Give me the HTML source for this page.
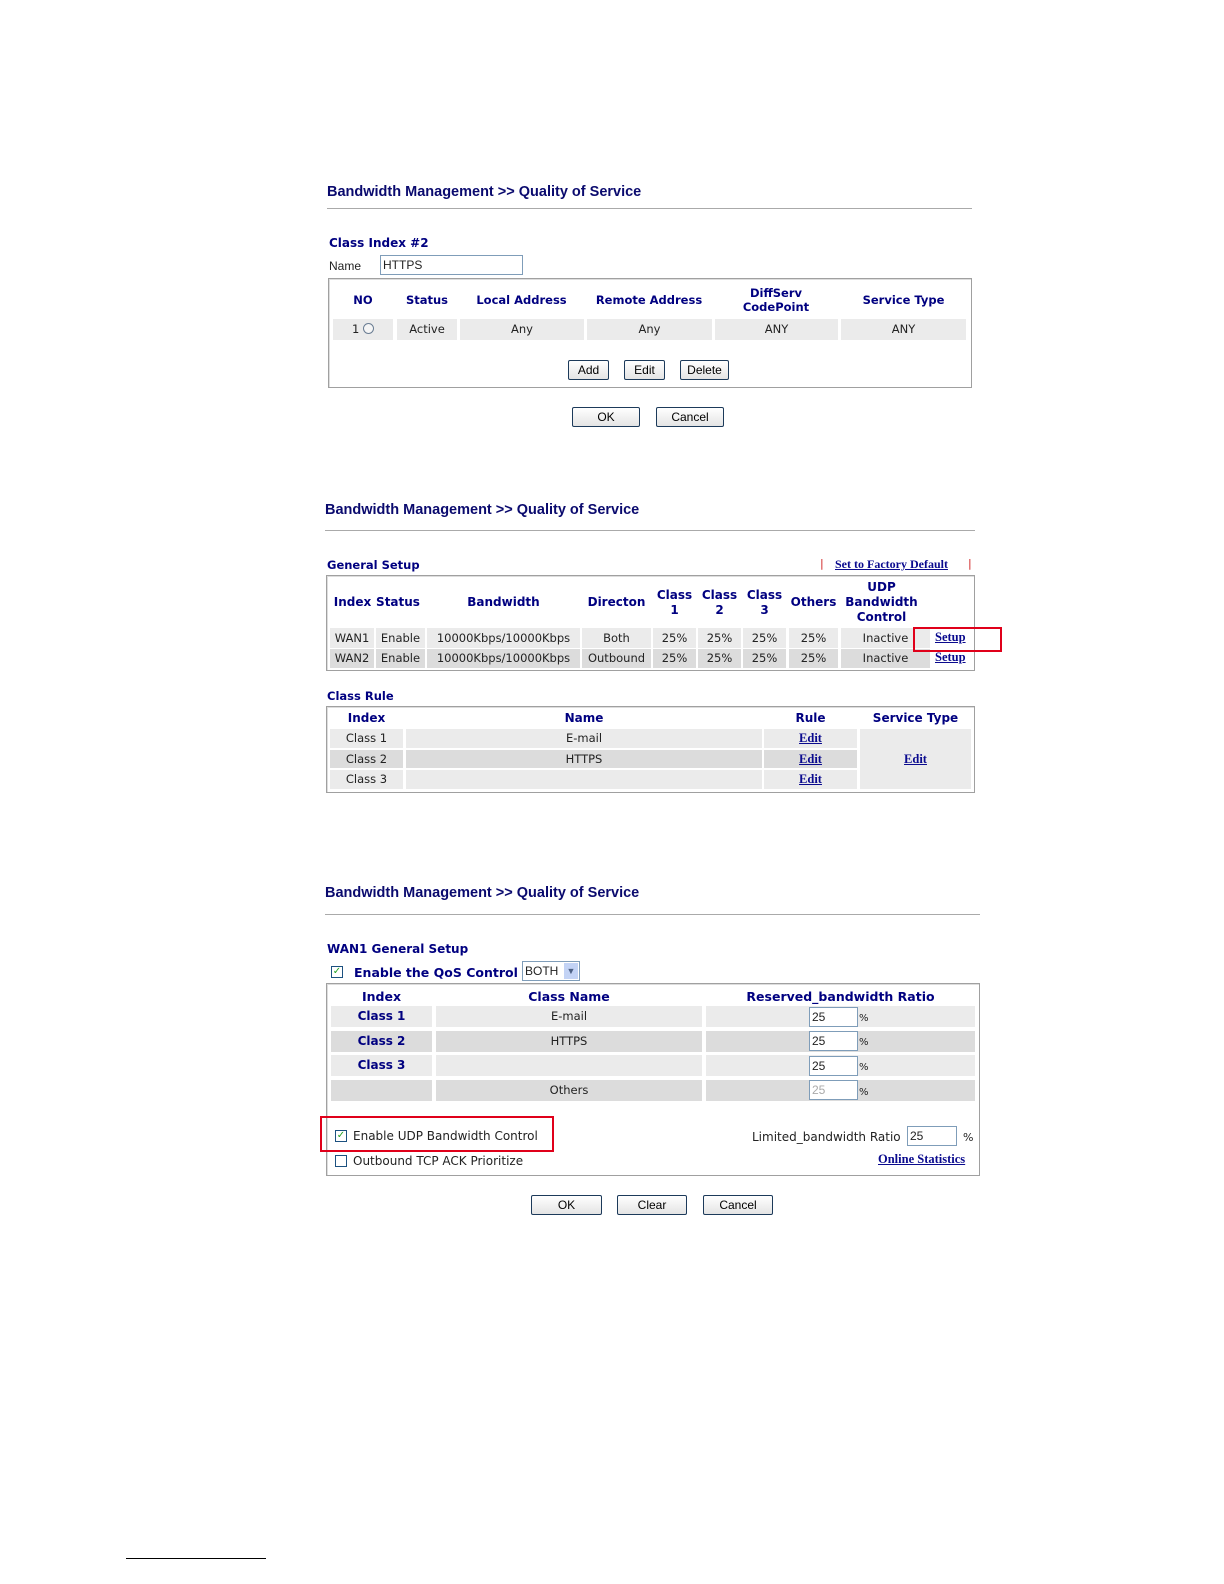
<!DOCTYPE html>
<html><head><meta charset="utf-8"><style>
*{margin:0;padding:0;box-sizing:border-box}
body{width:1224px;height:1584px;background:#fff;position:relative;font-family:"DejaVu Sans","Liberation Sans",sans-serif;font-size:11px;color:#222;overflow:hidden}
.a{position:absolute;white-space:nowrap}
.t{font-family:"Liberation Sans",sans-serif;font-weight:bold;font-size:14.5px;color:#0a0a6e}
.hl{position:absolute;height:1px;background:#aaa}
.h{font-weight:bold;color:#000080;font-size:11.5px}
.box{position:absolute;border:1px solid #a0a0a0;box-shadow:inset 1px 1px 0 #ddd}
.cell{position:absolute;background:#ebebeb;text-align:center;line-height:20px;font-size:11.5px}
.d{background:#dcdcdc}
.c{position:absolute;text-align:center;white-space:nowrap}
.btn{position:absolute;border:1px solid #1c3a5a;border-radius:2px;background:linear-gradient(#fff,#e4e4e4);text-align:center;font-family:"Liberation Sans",sans-serif;font-size:12px;line-height:18px;color:#000}
.lnk{color:#0a0a8e;font-weight:bold;text-decoration:underline;font-family:"Liberation Serif",serif;font-size:12.5px}
.inp{position:absolute;border:1px solid #7f9db9;background:#fff;font-family:"Liberation Sans",sans-serif;font-size:12px;padding-left:2px;line-height:18px}
.chk{position:absolute;width:12px;height:12px;border:1px solid #1c5180;background:#fff;font-size:10px;line-height:10px;color:#21a121;text-align:center;font-weight:bold}
.red{position:absolute;border:2px solid #e0001a}
</style></head><body>

<!-- Section 1 -->
<div class="a t" style="left:327px;top:184px">Bandwidth Management &gt;&gt; Quality of Service</div>
<div class="hl" style="left:327px;top:208px;width:645px"></div>
<div class="a h" style="left:329px;top:236px;font-size:12px">Class Index #2</div>
<div class="a" style="left:329px;top:259px;font-size:12px;font-family:'Liberation Sans',sans-serif">Name</div>
<div class="inp" style="left:380px;top:255px;width:143px;height:20px">HTTPS</div>
<div class="box" style="left:328px;top:278px;width:644px;height:110px"></div>
<div class="c h" style="left:333px;top:293px;width:60px">NO</div>
<div class="c h" style="left:397px;top:293px;width:60px">Status</div>
<div class="c h" style="left:460px;top:293px;width:123px">Local Address</div>
<div class="c h" style="left:587px;top:293px;width:124px">Remote Address</div>
<div class="c h" style="left:715px;top:286px;width:122px;line-height:14px">DiffServ<br>CodePoint</div>
<div class="c h" style="left:841px;top:293px;width:125px">Service Type</div>
<div class="cell" style="left:333px;top:319px;width:60px;height:21px;line-height:21px">1 <span style="display:inline-block;width:11px;height:11px;border:1px solid #6a7d93;border-radius:50%;vertical-align:-1px;background:#f5f5f5"></span></div>
<div class="cell" style="left:397px;top:319px;width:60px;height:21px;line-height:21px">Active</div>
<div class="cell" style="left:460px;top:319px;width:124px;height:21px;line-height:21px">Any</div>
<div class="cell" style="left:587px;top:319px;width:125px;height:21px;line-height:21px">Any</div>
<div class="cell" style="left:715px;top:319px;width:123px;height:21px;line-height:21px">ANY</div>
<div class="cell" style="left:841px;top:319px;width:125px;height:21px;line-height:21px">ANY</div>
<div class="btn" style="left:568px;top:360px;width:41px;height:20px">Add</div>
<div class="btn" style="left:624px;top:360px;width:41px;height:20px">Edit</div>
<div class="btn" style="left:680px;top:360px;width:49px;height:20px">Delete</div>
<div class="btn" style="left:572px;top:407px;width:68px;height:20px">OK</div>
<div class="btn" style="left:656px;top:407px;width:68px;height:20px">Cancel</div>

<!-- Section 2 -->
<div class="a t" style="left:325px;top:502px">Bandwidth Management &gt;&gt; Quality of Service</div>
<div class="hl" style="left:325px;top:530px;width:650px"></div>
<div class="a h" style="left:327px;top:558px">General Setup</div>
<div class="a" style="left:820px;top:557px;color:#d02020">|</div>
<div class="a lnk" style="left:835px;top:557px;font-size:12px">Set to Factory Default</div>
<div class="a" style="left:968px;top:557px;color:#d02020">|</div>
<div class="box" style="left:326px;top:575px;width:649px;height:96px"></div>
<div class="c h" style="left:330px;top:595px;width:45px;font-size:12px">Index</div>
<div class="c h" style="left:376px;top:595px;width:44px;font-size:12px">Status</div>
<div class="c h" style="left:427px;top:595px;width:153px;font-size:12px">Bandwidth</div>
<div class="c h" style="left:582px;top:595px;width:69px;font-size:12px">Directon</div>
<div class="c h" style="left:653px;top:588px;width:43px;line-height:15px;font-size:12px">Class<br>1</div>
<div class="c h" style="left:698px;top:588px;width:43px;line-height:15px;font-size:12px">Class<br>2</div>
<div class="c h" style="left:743px;top:588px;width:43px;line-height:15px;font-size:12px">Class<br>3</div>
<div class="c h" style="left:789px;top:595px;width:49px;font-size:12px">Others</div>
<div class="c h" style="left:841px;top:580px;width:81px;line-height:15px;font-size:12px">UDP<br>Bandwidth<br>Control</div>
<div class="cell" style="left:330px;top:628px;width:44px;height:20px">WAN1</div>
<div class="cell" style="left:376px;top:628px;width:49px;height:20px">Enable</div>
<div class="cell" style="left:427px;top:628px;width:153px;height:20px">10000Kbps/10000Kbps</div>
<div class="cell" style="left:582px;top:628px;width:69px;height:20px">Both</div>
<div class="cell" style="left:653px;top:628px;width:43px;height:20px">25%</div>
<div class="cell" style="left:698px;top:628px;width:43px;height:20px">25%</div>
<div class="cell" style="left:743px;top:628px;width:43px;height:20px">25%</div>
<div class="cell" style="left:789px;top:628px;width:49px;height:20px">25%</div>
<div class="cell" style="left:841px;top:628px;width:89px;height:20px">Inactive</div>
<div class="cell d" style="left:330px;top:649px;width:44px;height:19px;line-height:19px">WAN2</div>
<div class="cell d" style="left:376px;top:649px;width:49px;height:19px;line-height:19px">Enable</div>
<div class="cell d" style="left:427px;top:649px;width:153px;height:19px;line-height:19px">10000Kbps/10000Kbps</div>
<div class="cell d" style="left:582px;top:649px;width:69px;height:19px;line-height:19px">Outbound</div>
<div class="cell d" style="left:653px;top:649px;width:43px;height:19px;line-height:19px">25%</div>
<div class="cell d" style="left:698px;top:649px;width:43px;height:19px;line-height:19px">25%</div>
<div class="cell d" style="left:743px;top:649px;width:43px;height:19px;line-height:19px">25%</div>
<div class="cell d" style="left:789px;top:649px;width:49px;height:19px;line-height:19px">25%</div>
<div class="cell d" style="left:841px;top:649px;width:89px;height:19px;line-height:19px">Inactive</div>
<div class="a lnk" style="left:935px;top:630px">Setup</div>
<div class="a lnk" style="left:935px;top:650px">Setup</div>
<div class="red" style="left:913px;top:627px;width:89px;height:25px"></div>

<div class="a h" style="left:327px;top:689px">Class Rule</div>
<div class="box" style="left:326px;top:706px;width:649px;height:87px"></div>
<div class="c h" style="left:330px;top:711px;width:73px;font-size:12px">Index</div>
<div class="c h" style="left:406px;top:711px;width:356px;font-size:12px">Name</div>
<div class="c h" style="left:764px;top:711px;width:93px;font-size:12px">Rule</div>
<div class="c h" style="left:860px;top:711px;width:111px;font-size:12px">Service Type</div>
<div class="cell" style="left:330px;top:729px;width:73px;height:19px;line-height:19px">Class 1</div>
<div class="cell" style="left:406px;top:729px;width:356px;height:19px;line-height:19px">E-mail</div>
<div class="cell" style="left:764px;top:729px;width:93px;height:19px;line-height:19px"><span class="lnk">Edit</span></div>
<div class="cell d" style="left:330px;top:750px;width:73px;height:18px;line-height:18px">Class 2</div>
<div class="cell d" style="left:406px;top:750px;width:356px;height:18px;line-height:18px">HTTPS</div>
<div class="cell d" style="left:764px;top:750px;width:93px;height:18px;line-height:18px"><span class="lnk">Edit</span></div>
<div class="cell" style="left:330px;top:770px;width:73px;height:19px;line-height:19px">Class 3</div>
<div class="cell" style="left:406px;top:770px;width:356px;height:19px;line-height:19px"></div>
<div class="cell" style="left:764px;top:770px;width:93px;height:19px;line-height:19px"><span class="lnk">Edit</span></div>
<div class="cell" style="left:860px;top:729px;width:111px;height:60px;line-height:60px"><span class="lnk">Edit</span></div>

<!-- Section 3 -->
<div class="a t" style="left:325px;top:885px">Bandwidth Management &gt;&gt; Quality of Service</div>
<div class="hl" style="left:325px;top:914px;width:655px"></div>
<div class="a h" style="left:327px;top:942px;font-size:12px">WAN1 General Setup</div>
<div class="chk" style="left:331px;top:966px">✓</div>
<div class="a h" style="left:354px;top:965px;font-size:12.5px">Enable the QoS Control</div>
<div class="inp" style="left:522px;top:961px;width:58px;height:20px">BOTH<span style="position:absolute;right:1px;top:1px;width:14px;height:16px;background:#c3d3f5;color:#4d6185;font-size:9px;text-align:center;line-height:16px">▼</span></div>
<div class="box" style="left:326px;top:983px;width:654px;height:193px"></div>
<div class="c h" style="left:331px;top:989px;width:101px;font-size:12.5px">Index</div>
<div class="c h" style="left:436px;top:989px;width:266px;font-size:12.5px">Class Name</div>
<div class="c h" style="left:706px;top:989px;width:269px;font-size:12.5px">Reserved_bandwidth Ratio</div>

<div class="cell" style="left:331px;top:1006px;width:101px;height:21px;line-height:21px"><b style="color:#000080;font-size:12px">Class 1</b></div>
<div class="cell" style="left:436px;top:1006px;width:266px;height:21px;line-height:21px">E-mail</div>
<div class="cell" style="left:706px;top:1006px;width:269px;height:21px"></div>
<div class="cell d" style="left:331px;top:1031px;width:101px;height:21px;line-height:21px"><b style="color:#000080;font-size:12px">Class 2</b></div>
<div class="cell d" style="left:436px;top:1031px;width:266px;height:21px;line-height:21px">HTTPS</div>
<div class="cell d" style="left:706px;top:1031px;width:269px;height:21px"></div>
<div class="cell" style="left:331px;top:1055px;width:101px;height:21px;line-height:21px"><b style="color:#000080;font-size:12px">Class 3</b></div>
<div class="cell" style="left:436px;top:1055px;width:266px;height:21px"></div>
<div class="cell" style="left:706px;top:1055px;width:269px;height:21px"></div>
<div class="cell d" style="left:331px;top:1080px;width:101px;height:21px"></div>
<div class="cell d" style="left:436px;top:1080px;width:266px;height:21px;line-height:21px">Others</div>
<div class="cell d" style="left:706px;top:1080px;width:269px;height:21px"></div>
<div class="inp" style="left:809px;top:1007px;width:49px;height:20px">25</div>
<div class="inp" style="left:809px;top:1031px;width:49px;height:20px">25</div>
<div class="inp" style="left:809px;top:1056px;width:49px;height:20px">25</div>
<div class="inp" style="left:809px;top:1080px;width:49px;height:20px;color:#aaa">25</div>
<div class="a" style="left:859px;top:1013px;font-size:10px">%</div>
<div class="a" style="left:859px;top:1037px;font-size:10px">%</div>
<div class="a" style="left:859px;top:1062px;font-size:10px">%</div>
<div class="a" style="left:859px;top:1087px;font-size:10px">%</div>

<div class="chk" style="left:335px;top:1130px">✓</div>
<div class="a" style="left:353px;top:1129px;font-size:12px">Enable UDP Bandwidth Control</div>
<div class="red" style="left:320px;top:1116px;width:234px;height:36px"></div>
<div class="chk" style="left:335px;top:1155px;color:#fff"></div>
<div class="a" style="left:353px;top:1154px;font-size:12px">Outbound TCP ACK Prioritize</div>
<div class="a" style="left:752px;top:1130px;font-size:12px">Limited_bandwidth Ratio</div>
<div class="inp" style="left:907px;top:1126px;width:50px;height:20px">25</div>
<div class="a" style="left:963px;top:1131px;font-size:11px">%</div>
<div class="a lnk" style="left:878px;top:1152px">Online Statistics</div>

<div class="btn" style="left:531px;top:1195px;width:71px;height:20px">OK</div>
<div class="btn" style="left:617px;top:1195px;width:70px;height:20px">Clear</div>
<div class="btn" style="left:703px;top:1195px;width:70px;height:20px">Cancel</div>

<div class="hl" style="left:126px;top:1558px;width:140px;background:#000"></div>
</body></html>
